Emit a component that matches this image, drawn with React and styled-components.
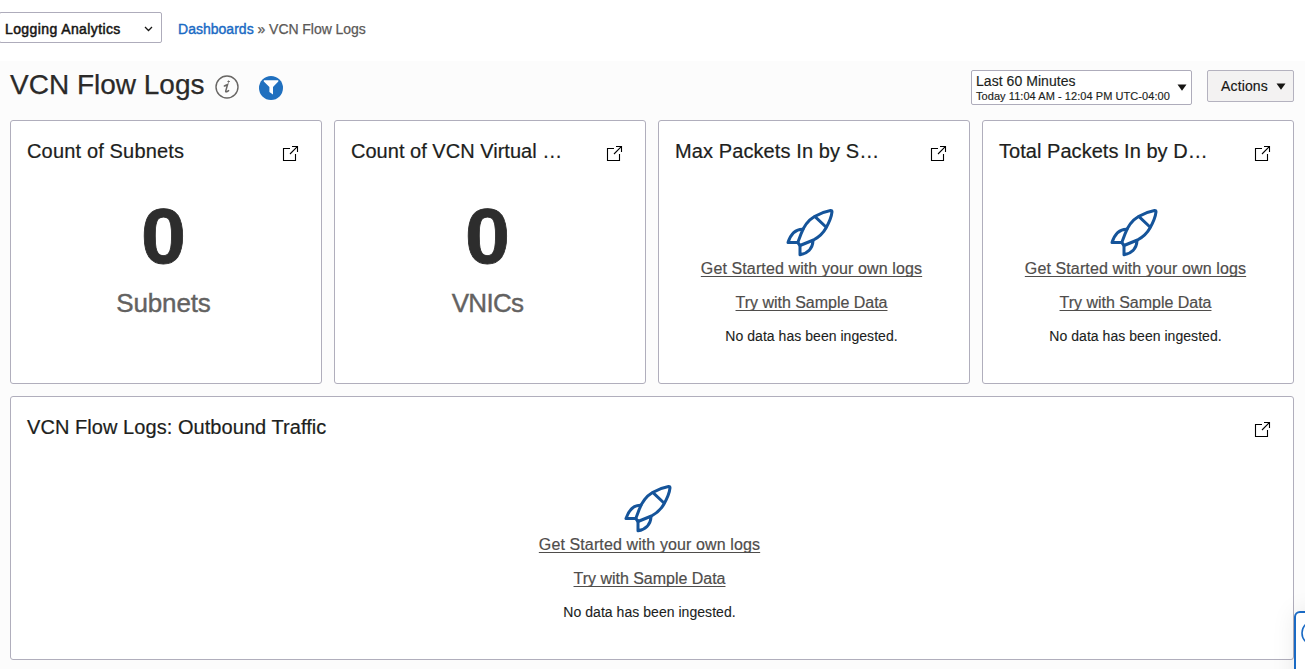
import React from "react";
import styled, { createGlobalStyle } from "styled-components";

const GlobalStyle = createGlobalStyle`
  * { box-sizing: border-box; }
  html, body { margin: 0; padding: 0; }
  body {
    height: 100vh;
    overflow: hidden;
    background: #fff;
    color: #201e1c;
    font-family: "Liberation Sans", Arial, sans-serif;
    font-size: 14px;
  }
`;

const Page = styled.div`
  display: flex;
  flex-direction: column;
  height: 669px;
  overflow: hidden;
  position: relative;
`;

const TopBar = styled.header`
  display: flex;
  align-items: center;
  height: 61px;
  padding-bottom: 6px;
  flex: none;
`;

const ServiceSelect = styled.button`
  display: flex;
  align-items: center;
  justify-content: space-between;
  width: 163px;
  height: 31px;
  margin: 0 16px 0 -1px;
  padding: 3px 8px 0 5px;
  border: 1px solid #aeacbb;
  border-radius: 2px;
  background: #fff;
  color: #161513;
  font: 14px "Liberation Sans", Arial, sans-serif;
  letter-spacing: 0.4px;
  -webkit-text-stroke: 0.5px currentColor;
`;

const Breadcrumb = styled.nav`
  padding-top: 3px;
  color: #5b5957;
  white-space: pre;
  letter-spacing: -0.05px;
  -webkit-text-stroke: 0.25px currentColor;
`;

const Crumb = styled.a`
  color: #1a6ac4;
  letter-spacing: 0.02px;
  -webkit-text-stroke: 0.4px currentColor;
`;

const Main = styled.main`
  flex: 1;
  padding: 9px 11px 0 10px;
  background: #fcfcfc;
`;

const TitleRow = styled.div`
  display: flex;
  align-items: flex-start;
  height: 50px;
`;

const Title = styled.h1`
  margin: -1px 0 0;
  font-size: 28px;
  font-weight: 400;
  line-height: 32px;
  color: #2b2a29;
  -webkit-text-stroke: 0.25px currentColor;
`;

const IconButton = styled.span`
  display: flex;
  margin: ${(p) => p.$top}px 0 0 ${(p) => p.$gap}px;
`;

const TimeSelect = styled.div`
  display: flex;
  align-items: center;
  justify-content: space-between;
  width: 221px;
  height: 35px;
  margin-left: auto;
  padding: 0 4px;
  border: 1px solid #aeacbb;
  border-radius: 2px;
  background: #fff;
`;

const TimeText = styled.div`
  display: flex;
  flex-direction: column;
  white-space: nowrap;
  -webkit-text-stroke: 0.15px currentColor;
`;

const TimeRange = styled.span`
  line-height: 16px;
  letter-spacing: 0.05px;
`;

const TimeDetail = styled.span`
  font-size: 11px;
  line-height: 14px;
  letter-spacing: 0.06px;
`;

const ActionsButton = styled.button`
  display: flex;
  align-items: center;
  justify-content: space-between;
  width: 87px;
  height: 32px;
  margin-left: 15px;
  padding: 0 7px 0 13px;
  border: 1px solid #b4b2bf;
  border-radius: 2px;
  background: #f3f2f2;
  color: #161513;
  font: 14px "Liberation Sans", Arial, sans-serif;
  letter-spacing: 0.15px;
  -webkit-text-stroke: 0.15px currentColor;
`;

const Grid = styled.div`
  display: grid;
  grid-template-columns: repeat(4, 312px);
  grid-auto-rows: 264px;
  gap: 12px;
`;

const Card = styled.section`
  grid-column: ${(p) => (p.$wide ? "1 / -1" : "auto")};
  display: flex;
  flex-direction: column;
  border: 1px solid #b0aebc;
  border-radius: 3px;
  background: #fff;
`;

const CardHeader = styled.div`
  display: flex;
  justify-content: space-between;
  height: 62px;
  padding: 18px 22px 0 16px;
`;

const CardTitle = styled.h2`
  margin: 0;
  font-size: 20px;
  font-weight: 400;
  line-height: 24px;
  white-space: nowrap;
  letter-spacing: ${(p) => p.$spacing}px;
  -webkit-text-stroke: 0.2px currentColor;
`;

const OpenIcon = styled.svg`
  width: 17px;
  height: 17px;
  margin-top: 6px;
  flex: none;
`;

const Metric = styled.div`
  display: flex;
  flex-direction: column;
  align-items: center;
  padding-right: 5px;
`;

const MetricValue = styled.div`
  padding-top: 13px;
  font: 700 77px/80px "Liberation Sans", Arial, sans-serif;
  color: #2d2d2d;
  transform: scaleX(1.05);
  -webkit-text-stroke: 0.8px currentColor;
`;

const MetricLabel = styled.div`
  padding-top: 12px;
  font-size: 26px;
  line-height: 30px;
  letter-spacing: ${(p) => p.$spacing}px;
  color: #636261;
  -webkit-text-stroke: 0.4px currentColor;
`;

const Empty = styled.div`
  display: flex;
  flex-direction: column;
  align-items: center;
  padding: 24px 5px 0 0;
`;

const RocketIcon = styled.svg`
  width: 50px;
  height: 50px;
  margin: 0 4px 2px 0;
`;

const EmptyLink = styled.a`
  margin-bottom: 14px;
  font-size: 16px;
  line-height: 20px;
  color: #4f4d4b;
  text-decoration: underline;
  text-decoration-thickness: 1px;
  text-underline-offset: 2px;
  text-decoration-skip-ink: none;
  letter-spacing: ${(p) => p.$spacing}px;
  -webkit-text-stroke: 0.2px currentColor;
`;

const EmptyNote = styled.p`
  margin: -1px 0 0;
  line-height: 20px;
  letter-spacing: 0.04px;
  -webkit-text-stroke: 0.1px currentColor;
`;

const HelpTab = styled.aside`
  position: absolute;
  left: 1294px;
  top: 611px;
  width: 60px;
  height: 80px;
  padding: 7px 0 0 5px;
  border: 2px solid #1a6ac4;
  border-radius: 6px;
  background: #fff;
  box-shadow: 0 0 24px rgba(0, 0, 0, 0.08);
`;

const Caret = () => (
  <svg width="10" height="7" viewBox="0 0 10 7">
    <path d="M0.5 0.5h9L5 6.8z" fill="#161513" />
  </svg>
);

const Chevron = () => (
  <svg width="9" height="6" viewBox="0 0 9 6" fill="none" stroke="#161513" strokeWidth="1.3">
    <path d="M1 1l3.500 3.500L8 1" />
  </svg>
);

const Info = () => (
  <svg width="24" height="24" viewBox="0 0 24 24" fill="none" stroke="#686664" strokeLinecap="round">
    <circle cx="12" cy="12" r="11" strokeWidth="1.4" />
    <path d="M9.400 11c1.100-.3 2-.9 3.200-1.500l-1.900 6.600c-.2 1.200 1 1 2.900-.5" strokeWidth="1.5" />
    <circle cx="13.500" cy="6.600" r="0.700" fill="#686664" strokeWidth="0.9" />
  </svg>
);

const Filter = () => (
  <svg width="24" height="24" viewBox="0 0 24 24">
    <circle cx="12" cy="12" r="12" fill="#2070bf" />
    <path d="M4.800 4.200h14.500v1.200L14 11v7.400l-3.600-2.300V11L4.800 5.400z" fill="#fff" />
  </svg>
);

const OpenExternal = () => (
  <OpenIcon viewBox="0 0 17 17" fill="none" stroke="#000" strokeWidth="1.1">
    <path d="M8 3.500H1.500v12h12V9" />
    <path d="M10 1.500h5.500V7M15.300 1.700L8 9" />
  </OpenIcon>
);

const Rocket = () => (
  <RocketIcon
    viewBox="0 0 50 50"
    fill="none"
    stroke="#15549a"
    strokeWidth="3"
    strokeLinejoin="round"
    strokeLinecap="round"
  >
    <path d="M45.500 3.500C40 4.500 34.500 6.500 29.500 9.500C22 14 18.500 20 16 27L12.800 35.500L15 38.500L28.500 33C34 30 38 26.500 41 21C44 15.500 46.500 10 47 4.800Q47 3.300 45.500 3.500Z" />
    <path d="M30 9.700L41 20" />
    <path d="M18 22.300C10.500 22 5.500 28 3 35.500H12.800" />
    <path d="M15 38.500V47.800C22 46.500 27.800 42 28 33.500" />
  </RocketIcon>
);

const EmptyState = () => (
  <Empty>
    <Rocket />
    <EmptyLink $spacing={0.115}>Get Started with your own logs</EmptyLink>
    <EmptyLink $spacing={-0.02}>Try with Sample Data</EmptyLink>
    <EmptyNote>No data has been ingested.</EmptyNote>
  </Empty>
);

const Panel = ({ title, spacing = 0, wide, children }) => (
  <Card $wide={wide}>
    <CardHeader>
      <CardTitle $spacing={spacing}>{title}</CardTitle>
      <OpenExternal />
    </CardHeader>
    {children}
  </Card>
);

const Count = ({ value, label, spacing }) => (
  <Metric>
    <MetricValue>{value}</MetricValue>
    <MetricLabel $spacing={spacing}>{label}</MetricLabel>
  </Metric>
);

export default function App() {
  return (
    <Page>
      <GlobalStyle />
      <TopBar>
        <ServiceSelect>
          Logging Analytics
          <Chevron />
        </ServiceSelect>
        <Breadcrumb>
          <Crumb>Dashboards</Crumb> » VCN Flow Logs
        </Breadcrumb>
      </TopBar>
      <Main>
        <TitleRow>
          <Title>VCN Flow Logs</Title>
          <IconButton $gap={10} $top={5}>
            <Info />
          </IconButton>
          <IconButton $gap={20} $top={6}>
            <Filter />
          </IconButton>
          <TimeSelect>
            <TimeText>
              <TimeRange>Last 60 Minutes</TimeRange>
              <TimeDetail>Today 11:04 AM - 12:04 PM UTC-04:00</TimeDetail>
            </TimeText>
            <Caret />
          </TimeSelect>
          <ActionsButton>
            Actions
            <Caret />
          </ActionsButton>
        </TitleRow>
        <Grid>
          <Panel title="Count of Subnets" spacing={0.16}>
            <Count value="0" label="Subnets" spacing={-0.15} />
          </Panel>
          <Panel title="Count of VCN Virtual …" spacing={0.02}>
            <Count value="0" label="VNICs" spacing={-0.7} />
          </Panel>
          <Panel title="Max Packets In by S…" spacing={0.1}>
            <EmptyState />
          </Panel>
          <Panel title="Total Packets In by D…" spacing={0.04}>
            <EmptyState />
          </Panel>
          <Panel title="VCN Flow Logs: Outbound Traffic" spacing={0.06} wide>
            <EmptyState />
          </Panel>
        </Grid>
      </Main>
      <HelpTab>
        <svg width="26" height="26" viewBox="0 0 26 26" fill="none" stroke="#1a6ac4" strokeWidth="1.6">
          <circle cx="13" cy="13" r="12" />
        </svg>
      </HelpTab>
    </Page>
  );
}
